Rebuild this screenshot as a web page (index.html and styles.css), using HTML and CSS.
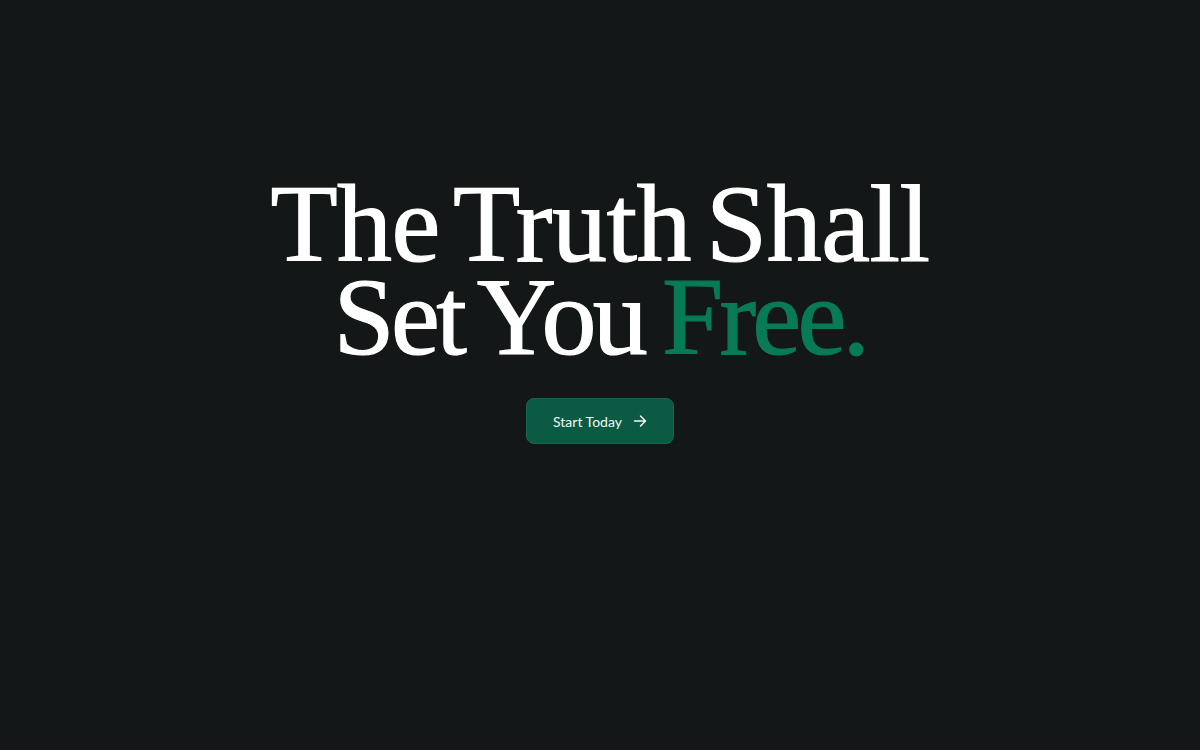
FILE: index.html
```html
<!DOCTYPE html>
<html lang="en">
<head>
<meta charset="utf-8">
<title>The Truth Shall Set You Free</title>
<link rel="stylesheet" href="styles.css">
</head>
<body>
<main class="hero">
  <h1 class="title"><span class="line">The Truth Shall</span><span class="line line-two">Set You <span class="accent">Free.</span></span></h1>
  <a class="cta" href="#">
    <span>Start Today</span>
    <svg class="arrow" width="14" height="14" viewBox="0 0 14 14" fill="none" stroke="currentColor" stroke-width="1.5" stroke-linecap="round" stroke-linejoin="round"><path d="M1.5 7h11M7.5 2l5 5-5 5"/></svg>
  </a>
</main>
</body>
</html>
```
FILE: styles.css
```css
html, body {
  margin: 0;
  padding: 0;
  height: 100%;
  background: #131718;
}
.hero {
  height: 750px;
  display: flex;
  flex-direction: column;
  align-items: center;
  padding-top: 178px;
  box-sizing: border-box;
}
.title {
  margin: 0;
  font-family: "Liberation Serif", "Times New Roman", serif;
  font-weight: 400;
  font-size: 110px;
  line-height: 93px;
  letter-spacing: -0.5px;
  word-spacing: -12px;
  color: #ffffff;
  text-align: center;
  display: flex;
  flex-direction: column;
  align-items: center;
  -webkit-text-stroke: 1.2px currentColor;
}
.line {
  display: block;
  white-space: nowrap;
}
.line-two {
  letter-spacing: -3.7px;
  word-spacing: -6px;
}
.accent {
  color: #087a56;
}
.cta {
  margin-top: 34px;
  width: 148px;
  height: 46px;
  box-sizing: border-box;
  display: flex;
  align-items: center;
  justify-content: center;
  gap: 11px;
  background: #0b5a43;
  border: 1px solid #17664e;
  border-radius: 8px;
  color: #f2f5f4;
  font-family: Lato, "Liberation Sans", sans-serif;
  font-size: 14px;
  text-decoration: none;
}
.arrow {
  display: block;
}
```
